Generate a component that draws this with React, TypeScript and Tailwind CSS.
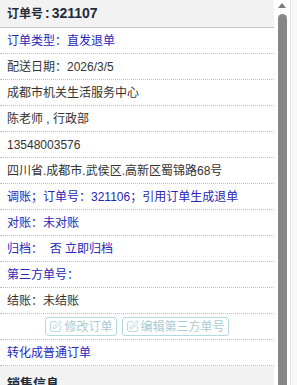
import { SquarePen } from "lucide-react";

const font = { fontFamily: '"Liberation Sans", "Noto Sans CJK SC", sans-serif' };

type Row = { text: string; blue?: boolean };

const rows: Row[] = [
  { text: "订单类型：直发退单", blue: true },
  { text: "配送日期：2026/3/5" },
  { text: "成都市机关生活服务中心" },
  { text: "陈老师 , 行政部" },
  { text: "13548003576" },
  { text: "四川省.成都市.武侯区.高新区蜀锦路68号" },
  { text: "调账；订单号：321106；引用订单生成退单", blue: true },
  { text: "对账：未对账", blue: true },
  { text: "归档：  否 立即归档", blue: true },
  { text: "第三方单号：", blue: true },
  { text: "结账：未结账" },
];

function InfoRow({ text, blue }: Row) {
  return (
    <div
      className={`h-[26px] shrink-0 flex items-center px-[7px] border-b border-dotted border-[#bdbdbd] text-[12px] whitespace-pre ${
        blue ? "text-[#2727b8]" : "text-[#333]"
      }`}
    >
      {text}
    </div>
  );
}

function EditButton({ label }: { label: string }) {
  return (
    <button className="h-[19px] flex items-center gap-[2px] px-[3px] border border-[#b5d9e3] rounded-[3px] text-[12px] text-[#a9cbd6] bg-white">
      <SquarePen size={13} strokeWidth={1.5} />
      {label}
    </button>
  );
}

export default function App() {
  return (
    <div className="flex w-[297px] h-[385px] overflow-hidden bg-white" style={font}>
      {/* panel */}
      <div className="w-[274px] flex flex-col">
        <div className="h-[28px] shrink-0 flex items-center px-[7px] bg-[#f2f2f2] border-b border-[#c8c8c8] text-[14px] font-bold text-[#1f2a3a]">
          <span className="text-[12px]">订单号</span>
          <span className="mx-[2px]">:</span>
          321107
        </div>
        {rows.map((r, i) => (
          <InfoRow key={i} {...r} />
        ))}
        <div className="h-[26px] shrink-0 flex items-center justify-center gap-[5px] border-b border-dotted border-[#bdbdbd]">
          <EditButton label="修改订单" />
          <EditButton label="编辑第三方单号" />
        </div>
        <InfoRow text="转化成普通订单" blue />
        <div className="flex-1 bg-[#f2f2f2] px-[7px] pt-[10px] text-[13px] leading-[16px] font-bold text-[#1f2a3a]">
          销售信息
        </div>
      </div>

      {/* scrollbar */}
      <div className="w-[14px] flex flex-col items-center bg-white">
        <svg width="8" height="6" viewBox="0 0 8 6" className="mt-[3px] ml-[2px]">
          <polygon points="4,0 8,5 0,5" fill="#7a7a7a" />
        </svg>
        <div className="mt-[5px] ml-[2px] w-[9px] flex-1 bg-[#878787] rounded-t-[5px]" />
      </div>

      {/* right edge */}
      <div className="flex-1 border-l border-[#e2e2e2] ml-[2px] bg-[#f7f7f7]" />
    </div>
  );
}
